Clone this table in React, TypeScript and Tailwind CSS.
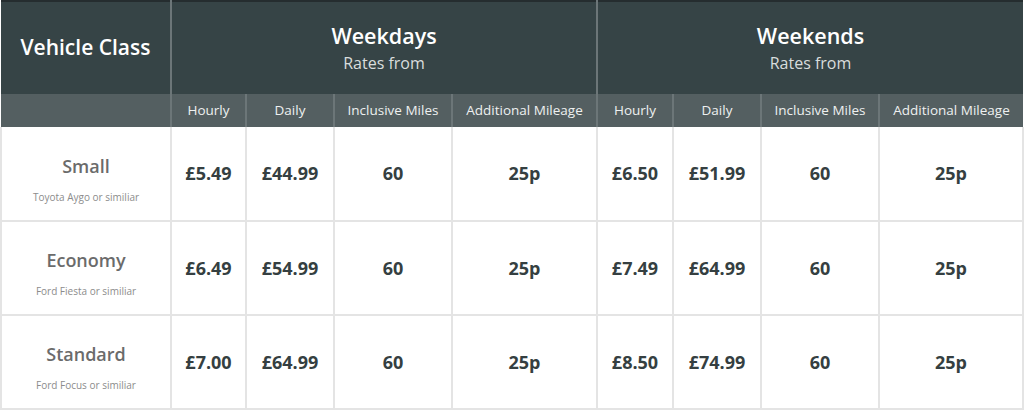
const rows = [
  { name: "Small", car: "Toyota Aygo or similiar", wd: ["£5.49", "£44.99", "60", "25p"], we: ["£6.50", "£51.99", "60", "25p"] },
  { name: "Economy", car: "Ford Fiesta or similiar", wd: ["£6.49", "£54.99", "60", "25p"], we: ["£7.49", "£64.99", "60", "25p"] },
  { name: "Standard", car: "Ford Focus or similiar", wd: ["£7.00", "£64.99", "60", "25p"], we: ["£8.50", "£74.99", "60", "25p"] },
];

const subHeads = ["Hourly", "Daily", "Inclusive Miles", "Additional Mileage"];

export default function App() {
  return (
    <div className="w-[1024px] h-[410px] bg-white" style={{ fontFamily: '"Open Sans", sans-serif' }}>
      <table className="w-[1022px] table-fixed border-collapse border-t-2 border-t-[#252d2f]">
        <colgroup>
          <col className="w-[170px]" />
          <col className="w-[75px]" />
          <col className="w-[88px]" />
          <col className="w-[118px]" />
          <col className="w-[145px]" />
          <col className="w-[76px]" />
          <col className="w-[88px]" />
          <col className="w-[118px]" />
          <col className="w-[144px]" />
        </colgroup>
        <thead>
          <tr className="h-[93px] bg-[#364446] text-white">
            <th className="border-r-2 border-[#6c7678] text-[21px] font-semibold text-center align-middle">
              Vehicle Class
            </th>
            <th colSpan={4} className="border-r-2 border-[#6c7678] text-center align-middle pt-[1px]">
              <div className="text-[21.5px] font-semibold leading-7">Weekdays</div>
              <div className="text-[16px] font-normal text-[#d9dddd] leading-6 mt-[1px]">Rates from</div>
            </th>
            <th colSpan={4} className="text-center align-middle pt-[1px]">
              <div className="text-[21.5px] font-semibold leading-7">Weekends</div>
              <div className="text-[16px] font-normal text-[#d9dddd] leading-6 mt-[1px]">Rates from</div>
            </th>
          </tr>
          <tr className="h-[33px] bg-[#545f61] text-[#eef0f0] text-[13.5px]">
            <th className="border-r-2 border-[#6c7678]"></th>
            {[...subHeads, ...subHeads].map((h, i) => (
              <th key={i} className={`font-normal text-center ${i < 7 ? "border-r-2 border-[#6c7678]" : ""}`}>
                {h}
              </th>
            ))}
          </tr>
        </thead>
        <tbody>
          {rows.map((r) => (
            <tr key={r.name} className="h-[94px]">
              <td className="border-2 border-t-0 border-[#e4e4e4] text-center align-middle pt-[10px]">
                <div className="text-[18px] font-semibold text-[#6b6b6b] leading-6 mb-[12px]">{r.name}</div>
                <div className="text-[10px] leading-[14px] text-[#8c8c8c]">{r.car}</div>
              </td>
              {[...r.wd, ...r.we].map((v, i) => (
                <td
                  key={i}
                  className="border-2 border-t-0 border-[#e4e4e4] text-center align-middle text-[18px] font-bold text-[#353f41]"
                >
                  {v}
                </td>
              ))}
            </tr>
          ))}
        </tbody>
      </table>
    </div>
  );
}
